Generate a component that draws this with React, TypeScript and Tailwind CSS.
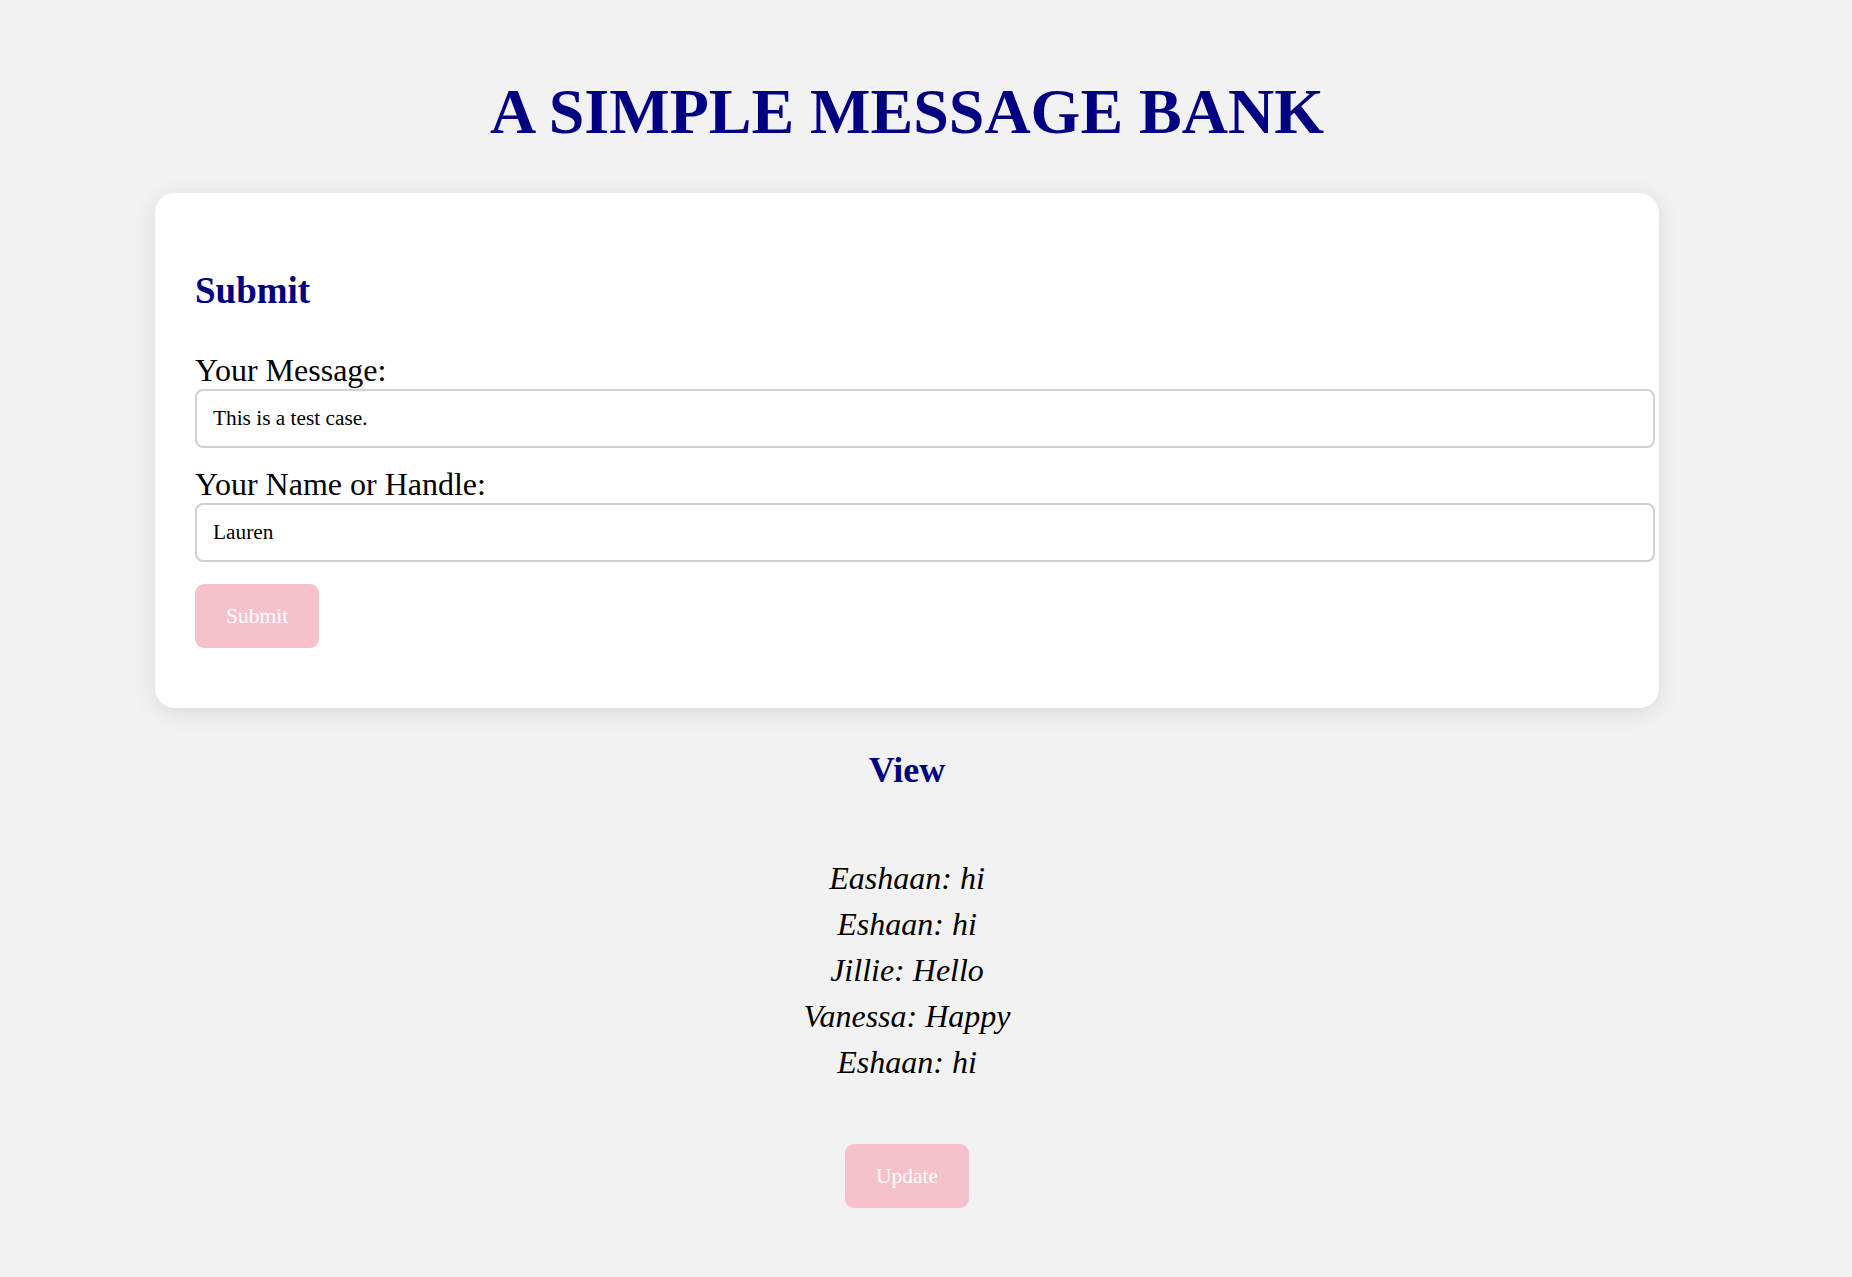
const messages = [
  { name: "Eashaan", text: "hi" },
  { name: "Eshaan", text: "hi" },
  { name: "Jillie", text: "Hello" },
  { name: "Vanessa", text: "Happy" },
  { name: "Eshaan", text: "hi" }
];

function PinkButton({ label }: { label: string }) {
  return (
    <button
      type="button"
      className="flex h-[64px] items-center rounded-[9px] bg-[#f5c2cb] px-[31px] text-[21.5px] text-white"
    >
      {label}
    </button>
  );
}

export default function App() {
  return (
    <div className="min-h-screen bg-[#f2f2f2] font-['Liberation_Serif',serif] text-black">
      <div className="w-[1814px] pt-[75px] pb-[70px]">
        <h1 className="text-center text-[64px] font-bold leading-[74px] text-[#000080]">
          A SIMPLE MESSAGE BANK
        </h1>

        <section className="mt-[44px] ml-[155px] w-[1504px] rounded-[20px] bg-white px-[40px] pt-[77px] pb-[60px] shadow-[0_4px_24px_rgba(0,0,0,0.1)]">
          <h2 className="text-[37px] font-bold leading-[42px] text-[#000080]">Submit</h2>
          <form className="mt-[39px]">
            <label htmlFor="message" className="block text-[32px] leading-[38px]">
              Your Message:
            </label>
            <input
              id="message"
              defaultValue="This is a test case."
              className="box-content block h-[23px] w-full rounded-[8px] border-2 border-[#d0d0d0] bg-white px-[16px] py-[16px] text-[21.33px] outline-none"
            />
            <label htmlFor="handle" className="mt-[17px] block text-[32px] leading-[38px]">
              Your Name or Handle:
            </label>
            <input
              id="handle"
              defaultValue="Lauren"
              className="box-content block h-[23px] w-full rounded-[8px] border-2 border-[#d0d0d0] bg-white px-[16px] py-[16px] text-[21.33px] outline-none"
            />
            <div className="mt-[22px] flex">
              <PinkButton label="Submit" />
            </div>
          </form>
        </section>

        <h2 className="mt-[42px] text-center text-[36px] font-bold leading-[41px] text-[#000080]">View</h2>
        <div className="mt-[64px] text-center text-[32px] italic leading-[46px]">
          {messages.map((m, i) => (
            <div key={i}>
              {m.name}: {m.text}
            </div>
          ))}
        </div>
        <div className="mt-[59px] flex justify-center">
          <PinkButton label="Update" />
        </div>
      </div>
    </div>
  );
}
